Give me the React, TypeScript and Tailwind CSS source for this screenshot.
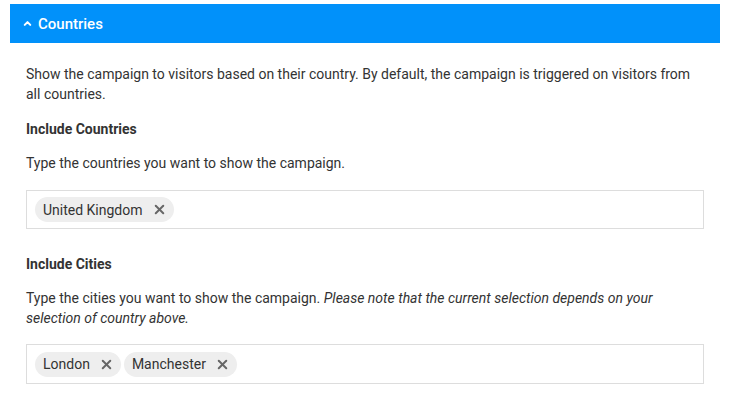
import { ChevronUp, X } from 'lucide-react';

function Chip({ label }: { label: string }) {
  return (
    <span className="inline-flex items-center h-[25px] pl-2 pr-[7px] rounded-full bg-[#eeeeee] text-[14px] text-[#333]">
      {label}
      <X className="w-[15px] h-[15px] ml-[9px] text-[#666]" strokeWidth={3.2} />
    </span>
  );
}

export default function App() {
  return (
    <div className="pt-1 pl-[10px] pr-[20px] bg-white min-h-[404px] font-['Roboto',sans-serif] text-[14px] leading-5 text-[#333]">
      <div className="h-[39px] bg-[#0191fa] flex items-center pl-[12px] text-white">
        <ChevronUp className="w-[11px] h-[11px] mr-[5px]" strokeWidth={4.5} />
        <span className="text-[15px] font-medium">Countries</span>
      </div>

      <div className="px-4 pt-[21px]">
        <p>
          Show the campaign to visitors based on their country. By default, the campaign is triggered on visitors from
          all countries.
        </p>

        <h3 className="mt-[15px] font-bold">Include Countries</h3>
        <p className="mt-[14px]">Type the countries you want to show the campaign.</p>
        <div className="mt-[17px] h-[39px] border border-[#dddddd] flex items-center gap-[3px] px-2">
          <Chip label="United Kingdom" />
        </div>

        <h3 className="mt-[25px] font-bold">Include Cities</h3>
        <p className="mt-[14px]">
          Type the cities you want to show the campaign.{' '}
          <em>Please note that the current selection depends on your selection of country above.</em>
        </p>
        <div className="mt-[16px] h-[40px] border border-[#dddddd] flex items-center gap-[3px] px-2">
          <Chip label="London" />
          <Chip label="Manchester" />
        </div>
      </div>
    </div>
  );
}
